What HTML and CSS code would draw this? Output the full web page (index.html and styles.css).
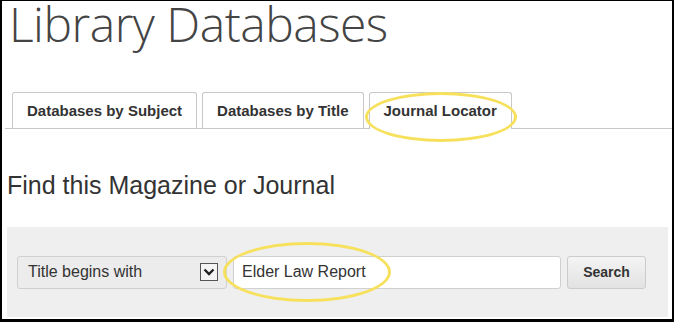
FILE: index.html
```html
<!DOCTYPE html>
<html lang="en">
<head>
  <meta charset="UTF-8">
  <meta name="viewport" content="width=device-width, initial-scale=1.0">
  <title>Library Databases</title>
  <link rel="stylesheet" href="styles.css">
</head>
<body>
  <div class="frame">
    <h1>Library Databases</h1>

    <ul class="tabs">
      <li class="tab">Databases by Subject</li>
      <li class="tab">Databases by Title</li>
      <li class="tab active">Journal Locator</li>
    </ul>

    <h2>Find this Magazine or Journal</h2>

    <form class="panel">
      <div class="select">
        <span>Title begins with</span>
        <span class="arrow">
          <svg width="12" height="8" viewBox="0 0 12 8"><path d="M1.5 1.5 L6 6 L10.5 1.5" fill="none" stroke="#222" stroke-width="2.4"/></svg>
        </span>
      </div>
      <input type="text" class="query" value="Elder Law Report">
      <button type="button">Search</button>
    </form>

    <span class="mark mark-tab"></span>
    <span class="mark mark-input"></span>
  </div>
</body>
</html>
```

FILE: styles.css
```css
html, body {
  margin: 0;
  padding: 0;
}
body {
  font-family: "Liberation Sans", Arial, sans-serif;
  color: #333;
  background: #000;
}
.frame {
  position: relative;
  box-sizing: border-box;
  width: 674px;
  height: 322px;
  border-style: solid;
  border-color: #000;
  border-width: 1px 2px 3px 2px;
  background: #fff;
  overflow: hidden;
}
h1 {
  margin: 0;
  padding: 0 0 0 7px;
  font-family: "Open Sans", sans-serif;
  font-weight: 300;
  font-size: 48px;
  line-height: 46px;
  color: #444;
  letter-spacing: -0.5px;
}
.tabs {
  display: flex;
  gap: 5px;
  list-style: none;
  margin: 45px 0 0 3px;
  padding: 0 0 0 7px;
  border-bottom: 1px solid #c8c8c8;
}
.tab {
  box-sizing: border-box;
  height: 36px;
  padding: 0 14px;
  border: 1px solid #c8c8c8;
  border-bottom: none;
  border-radius: 3px 3px 0 0;
  background: #fff;
  font-weight: bold;
  font-size: 15px;
  line-height: 36px;
  color: #333;
}
.tab.active {
  height: 37px;
  margin-bottom: -1px;
}
h2 {
  margin: 42px 0 0 5px;
  font-weight: normal;
  font-size: 25px;
  line-height: 28px;
  color: #333;
}
.panel {
  display: flex;
  align-items: center;
  gap: 6px;
  box-sizing: border-box;
  height: 90px;
  margin: 28px 4px 0 5px;
  padding: 0 0 0 10px;
  background: #efefef;
}
.select {
  box-sizing: border-box;
  display: flex;
  align-items: center;
  justify-content: space-between;
  width: 210px;
  height: 33px;
  padding: 0 8px 0 10px;
  border: 1px solid #d0d0d0;
  border-radius: 3px;
  background: #ececec;
  font-size: 16px;
}
.arrow {
  box-sizing: border-box;
  display: flex;
  align-items: center;
  justify-content: center;
  width: 18px;
  height: 18px;
  border: 1px solid #555;
  background: #f4f4f4;
}
.query {
  box-sizing: border-box;
  width: 328px;
  height: 33px;
  padding: 0 8px;
  border: 1px solid #d0d0d0;
  border-radius: 3px;
  background: #fff;
  font-family: "Liberation Sans", Arial, sans-serif;
  font-size: 16px;
  color: #333;
}
.panel button {
  box-sizing: border-box;
  width: 79px;
  height: 33px;
  border: 1px solid #ccc;
  border-radius: 3px;
  background: linear-gradient(#f4f4f4, #e2e2e2);
  font-family: "Liberation Sans", Arial, sans-serif;
  font-weight: bold;
  font-size: 14px;
  color: #333;
}
.mark {
  position: absolute;
  border: 3px solid #f7e15c;
  border-radius: 50%;
  box-sizing: border-box;
}
.mark-tab {
  left: 363px;
  top: 91px;
  width: 152px;
  height: 50px;
}
.mark-input {
  left: 221px;
  top: 241px;
  width: 168px;
  height: 60px;
}
```
